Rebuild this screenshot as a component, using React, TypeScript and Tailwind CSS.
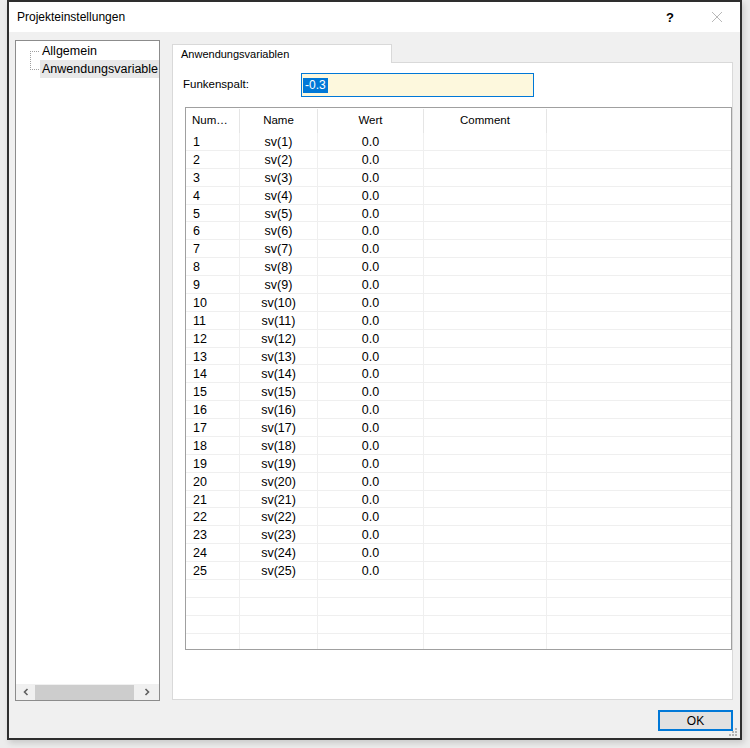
import React from "react";

const rows = Array.from({ length: 29 }, (_, i) => i + 1);

function TreeLines() {
  return (
    <svg width="12" height="36" className="shrink-0">
      <g fill="#a0a0a0">
        {Array.from({ length: 10 }, (_, i) => (
          <rect key={"v" + i} x="2" y={9 + i * 2} width="1" height="1" />
        ))}
        {Array.from({ length: 5 }, (_, i) => (
          <rect key={"a" + i} x={2 + i * 2} y="9" width="1" height="1" />
        ))}
        {Array.from({ length: 5 }, (_, i) => (
          <rect key={"b" + i} x={2 + i * 2} y="27" width="1" height="1" />
        ))}
      </g>
    </svg>
  );
}

function Grip() {
  const dots = [
    [6, 0],
    [6, 3],
    [3, 3],
    [6, 6],
    [3, 6],
    [0, 6],
  ];
  return (
    <svg width="8" height="8" className="absolute right-[3px] bottom-[2px]">
      {dots.map(([x, y]) => (
        <rect key={`${x}-${y}`} x={x} y={y} width="2" height="2" fill="#b4b4b4" />
      ))}
    </svg>
  );
}

export default function App() {
  return (
    <div className="w-[750px] h-[748px] bg-[#ececec] pl-[7px] font-['Liberation_Sans',Arial,sans-serif] text-[#1a1a1a]">
      <div className="relative w-[735px] h-[740px] border-2 border-[#2e2e2e] bg-[#f0f0f0] flex flex-col shadow-[2px_3px_6px_rgba(0,0,0,0.15)]">
        {/* Title bar */}
        <div className="h-[30px] bg-white flex items-center justify-between pl-[8px] pr-[17px] shrink-0">
          <span className="text-[12px] text-black">Projekteinstellungen</span>
          <div className="flex items-center gap-[37px]">
            <span className="text-[13px] font-bold text-black leading-none">?</span>
            <svg width="12" height="12" viewBox="0 0 12 12">
              <path d="M1 1L11 11M11 1L1 11" stroke="#b8b8b8" strokeWidth="1" />
            </svg>
          </div>
        </div>

        {/* Body */}
        <div className="flex-1 flex flex-col pt-[8px] pl-[6px] pr-[7px]">
          <div className="flex h-[661px]">
            {/* Tree */}
            <div className="w-[145px] border border-[#8c8c8c] bg-white flex flex-col">
              <div className="flex-1 flex pl-[12px] pt-[1px] overflow-hidden">
                <TreeLines />
                <div className="flex-1 flex flex-col text-[12.5px] text-black whitespace-nowrap overflow-hidden">
                  <div className="h-[18px] flex items-center px-[2px]">Allgemein</div>
                  <div className="h-[18px] flex items-center px-[2px] bg-[#e8e8e8]">Anwendungsvariable</div>
                </div>
              </div>
              <div className="h-[16px] bg-[#f0f0f0] flex items-center">
                <div className="w-[19px] flex justify-center">
                  <svg width="6" height="8" viewBox="0 0 6 8">
                    <path d="M4.5 1L1.5 4L4.5 7" stroke="#606060" strokeWidth="1.6" fill="none" />
                  </svg>
                </div>
                <div className="w-[99px] h-[15px] bg-[#cdcdcd]" />
                <div className="flex-1 flex justify-center">
                  <svg width="6" height="8" viewBox="0 0 6 8">
                    <path d="M1.5 1L4.5 4L1.5 7" stroke="#606060" strokeWidth="1.6" fill="none" />
                  </svg>
                </div>
              </div>
            </div>

            {/* Tab area */}
            <div className="ml-[12px] flex-1 flex flex-col pt-[4px] pb-[1px]">
              <div className="flex">
                <div className="w-[220px] h-[19px] bg-white border border-b-0 border-[#d9d9d9] pl-[8px] flex items-center text-[11px] text-black -mb-px relative z-10">
                  Anwendungsvariablen
                </div>
              </div>
              <div className="flex-1 bg-white border border-[#d9d9d9] pl-[10px] pt-[10px]">
                <div className="flex items-center h-[24px]">
                  <span className="w-[118px] text-[11.5px] text-black">Funkenspalt:</span>
                  <div className="w-[233px] h-[24px] border border-[#0078d7] bg-[#fdf8dd] flex items-center pl-[1px]">
                    <span className="bg-[#0078d7] text-white text-[12px] px-[2px] h-[15px] leading-[15px]">-0.3</span>
                  </div>
                </div>

                {/* Table */}
                <div className="mt-[10px] ml-[2px] w-[547px] h-[543px] border border-[#a0a0a0] overflow-hidden">
                  <div className="flex h-[25px] text-[11.5px] text-black pt-px">
                    <div className="w-[54px] border-r border-[#e5e5e5] pl-[6px] flex items-center">Num…</div>
                    <div className="w-[78px] border-r border-[#e5e5e5] flex items-center justify-center">Name</div>
                    <div className="w-[106px] border-r border-[#e5e5e5] flex items-center justify-center">Wert</div>
                    <div className="w-[123px] border-r border-[#e5e5e5] flex items-center justify-center">Comment</div>
                    <div className="flex-1" />
                  </div>
                  {rows.map((n) => {
                    const filled = n <= 25;
                    return (
                      <div key={n} className="flex h-[17.875px] text-[12.5px] text-black">
                        <div className="w-[54px] border-r border-b border-[#efefef] pl-[7px] pt-[2px] flex items-center">
                          {filled ? n : ""}
                        </div>
                        <div className="w-[78px] border-r border-b border-[#efefef] pt-[2px] flex items-center justify-center">
                          {filled ? `sv(${n})` : ""}
                        </div>
                        <div className="w-[106px] border-r border-b border-[#efefef] pt-[2px] flex items-center justify-center">
                          {filled ? "0.0" : ""}
                        </div>
                        <div className="w-[123px] border-r border-b border-[#efefef]" />
                        <div className="flex-1 border-b border-[#efefef]" />
                      </div>
                    );
                  })}
                </div>
              </div>
            </div>
          </div>

          {/* Footer */}
          <div className="flex justify-end mt-[9px]">
            <button className="w-[75px] h-[21px] border-2 border-[#0078d7] bg-[#e1e1e1] text-[12px] text-black flex items-center justify-center">
              OK
            </button>
          </div>
        </div>
        <Grip />
      </div>
    </div>
  );
}
